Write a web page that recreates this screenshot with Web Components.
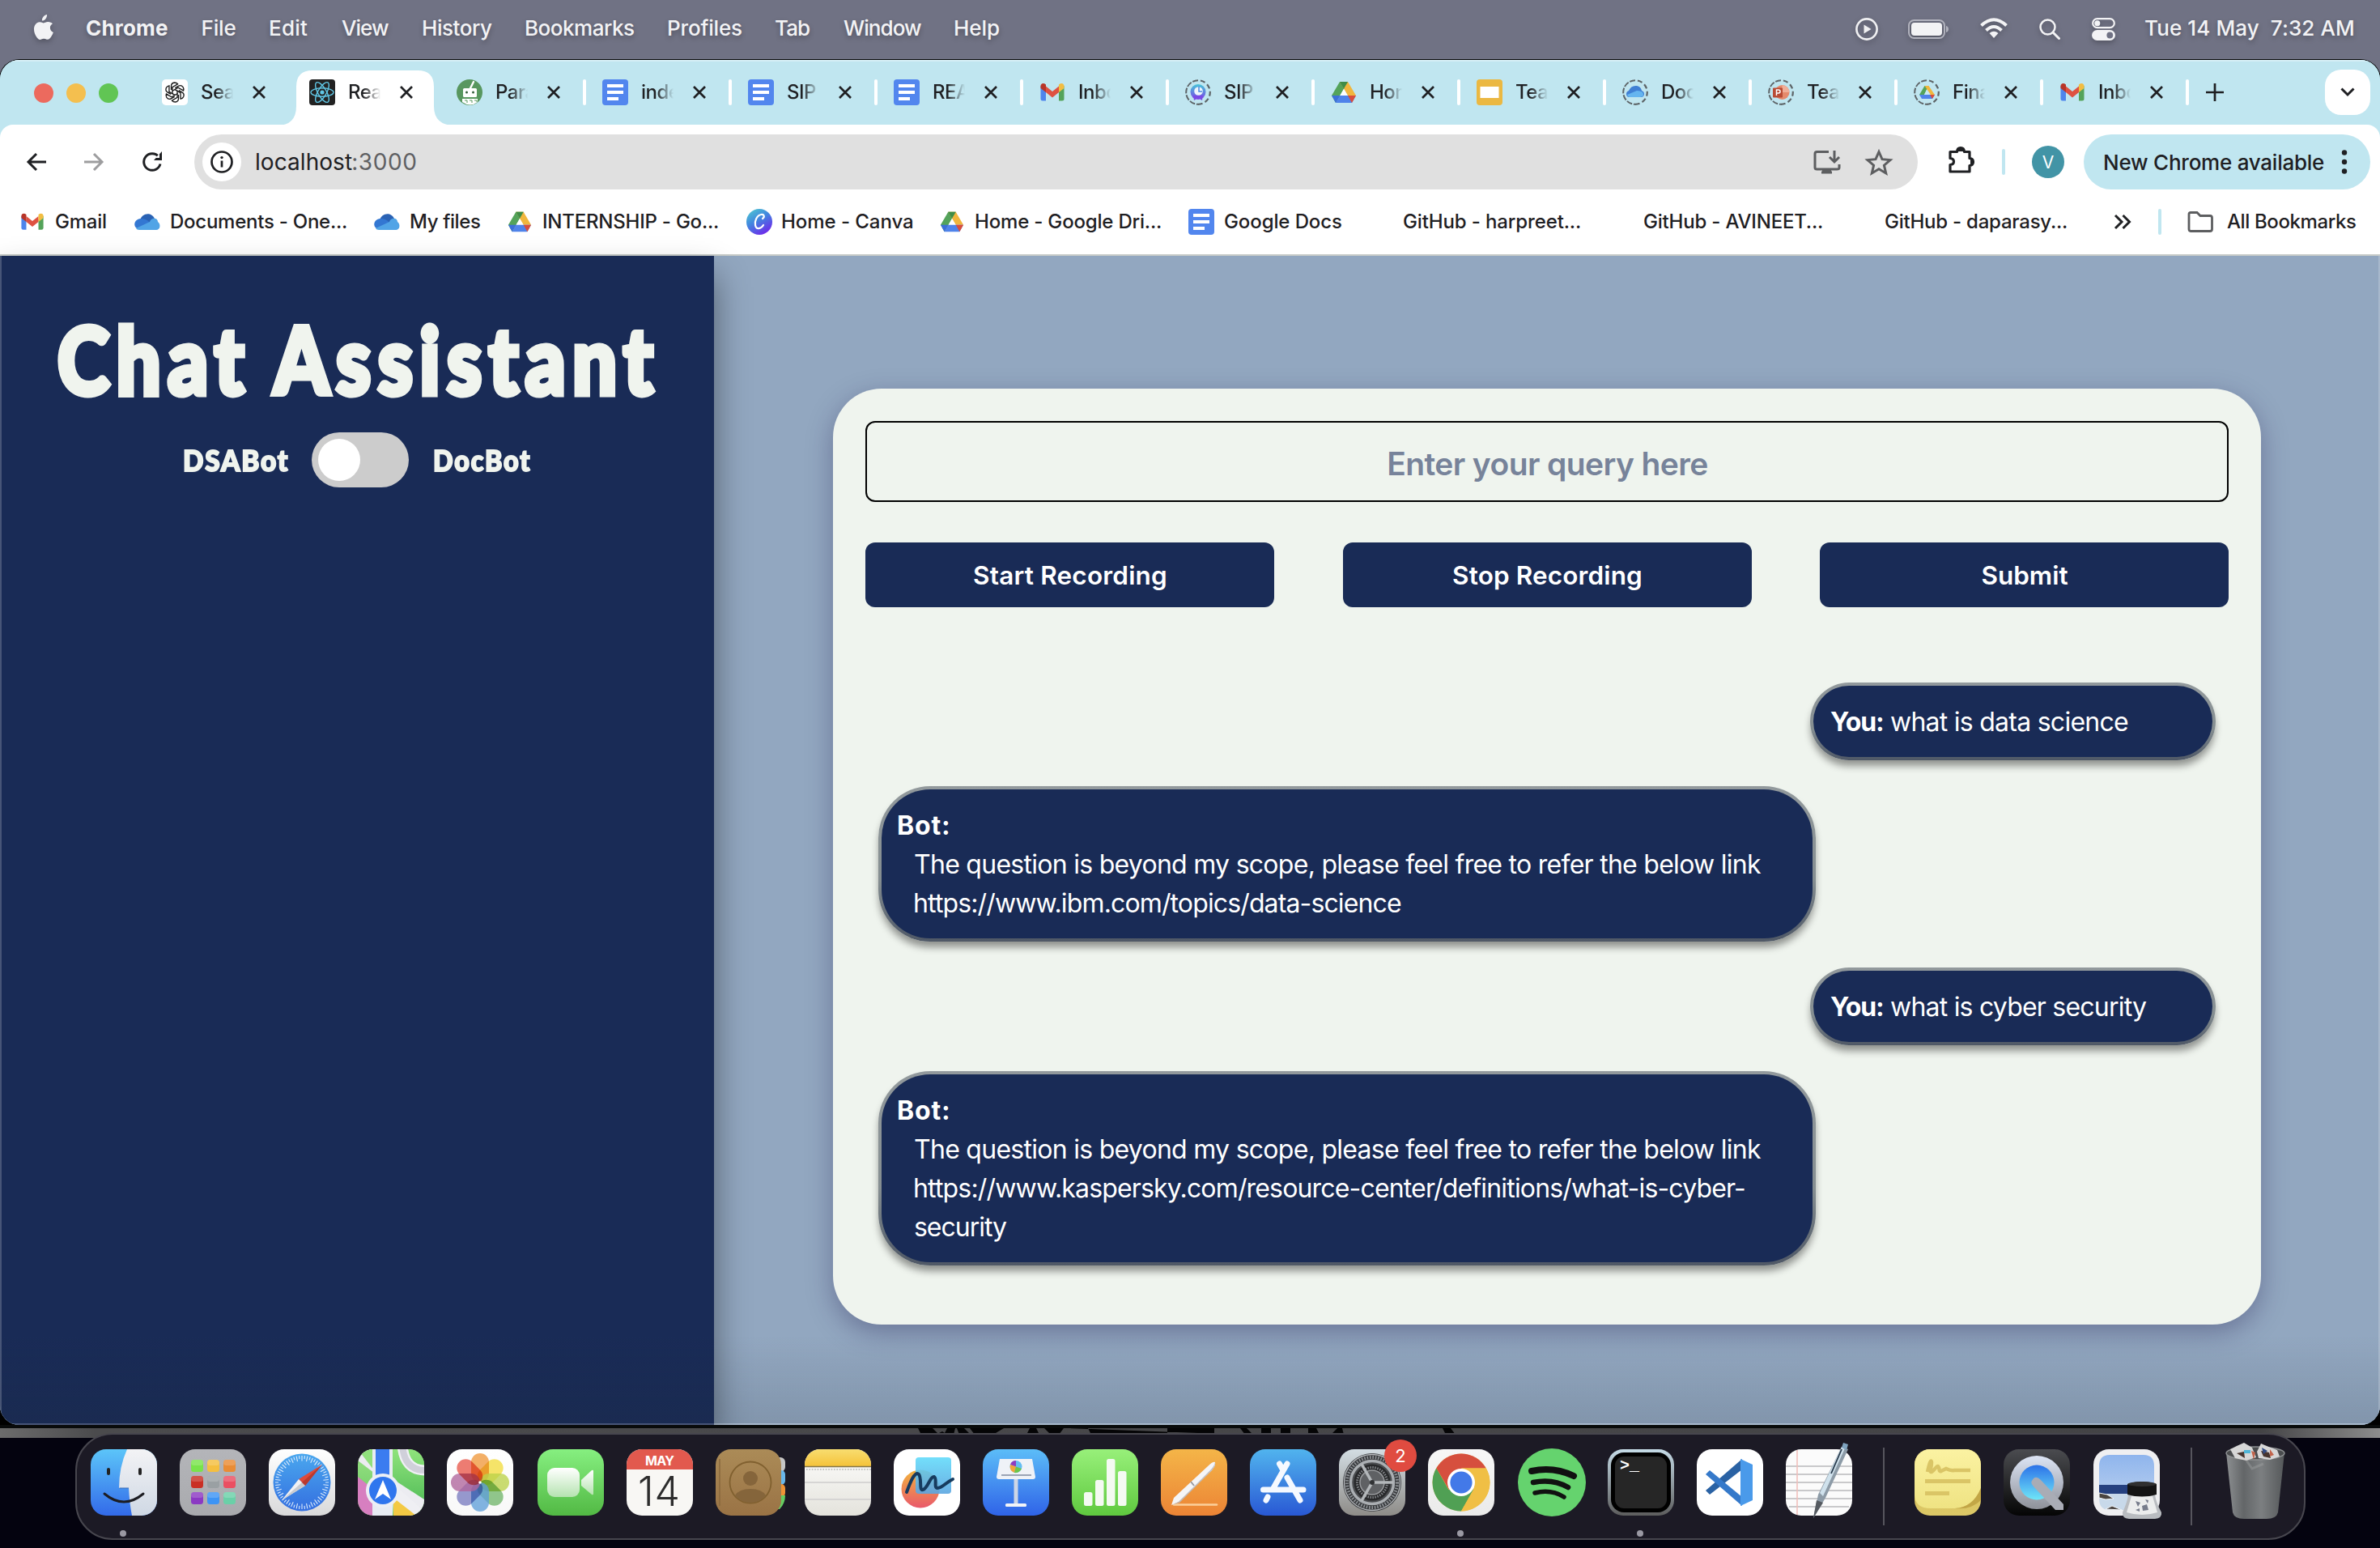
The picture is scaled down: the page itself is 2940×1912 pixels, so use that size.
<!DOCTYPE html>
<html lang="en">
<head>
<meta charset="utf-8">
<title>Chat Assistant</title>
<style>
html,body{margin:0;width:2940px;height:1912px;overflow:hidden;background:#04030f;font-family:Inter,"Liberation Sans",sans-serif}
</style>
</head>
<body>
<mac-desktop></mac-desktop>
<script>
const gptArm = 'M11.500 13V8.500q0-4 4-4.500 2.500 0 4 1.800L13 9.600v8.600';
const ICONS = {
apple:'<svg viewBox="0 0 26 32"><path fill="#f3f3f5" d="M18 0c.3 2-.6 4-1.800 5.500-1.200 1.400-2.700 2.200-4.300 2.100-.2-1.900.7-3.900 1.800-5.100C14.900 1 16.600.2 18 0zM25 11.200c-2 1.200-3.100 2.900-3.100 5.100 0 2.600 1.500 4.600 4 5.600-.6 1.900-1.600 3.800-2.800 5.500-1.200 1.700-2.400 3.400-4.300 3.400-1.900 0-2.400-1.100-4.600-1.100S11.300 30.900 9.500 31c-1.900.1-3.300-1.800-4.500-3.500C2.500 23.900.600 17.300 3.200 12.900c1.300-2.300 3.600-3.600 6-3.700 1.900 0 3.600 1.200 4.700 1.200 1.100 0 3.200-1.500 5.500-1.300 2.400.1 4.200.9 5.600 2.100z"/></svg>',
play:'<svg viewBox="0 0 28 28"><circle cx="14" cy="14" r="12.600" fill="none" stroke="#f0f0f2" stroke-width="2.600"/><path d="M10.500 8.500l9 5.500-9 5.500z" fill="#f0f0f2"/></svg>',
battery:'<svg viewBox="0 0 51 24"><rect x="1" y="1" width="44" height="22" rx="6.500" fill="none" stroke="#b1b2bd" stroke-width="2"/><rect x="4" y="4" width="38" height="16" rx="4" fill="#f3f3f5"/><path d="M47 8c4 1 4 7 0 8z" fill="#b1b2bd"/></svg>',
wifi:'<svg viewBox="0 0 34 26"><g fill="none" stroke="#f3f3f5" stroke-width="4"><path d="M1.500 9.500Q17-5 32.500 9.500"/><path d="M7.500 15.500Q17 6.500 26.500 15.500"/></g><path d="M17 25l-5.500-6q5.500-4.500 11 0z" fill="#f3f3f5"/></svg>',
search:'<svg viewBox="0 0 26 26"><circle cx="10.500" cy="10.500" r="9" fill="none" stroke="#f3f3f5" stroke-width="2.500"/><path d="M17 17l7.500 7.500" stroke="#f3f3f5" stroke-width="3" stroke-linecap="round"/></svg>',
control:'<svg viewBox="0 0 29 28"><rect x="1.200" y="1.200" width="26.600" height="11" rx="5.500" fill="none" stroke="#f3f3f5" stroke-width="2.200"/><circle cx="6.800" cy="6.700" r="3.500" fill="#f3f3f5"/><rect x="0" y="15" width="29" height="13" rx="6.500" fill="#f3f3f5"/><circle cx="22.300" cy="21.500" r="3.900" fill="#707284"/></svg>',
gpt:'<svg viewBox="0 0 32 32"><rect width="32" height="32" rx="5" fill="#fff"/><g fill="none" stroke="#1a1a1a" stroke-width="1.350">'+[0,60,120,180,240,300].map(a=>`<path d="${gptArm}" transform="rotate(${a} 16 16)"/>`).join('')+'</g></svg>',
react:'<svg viewBox="0 0 32 32"><rect width="32" height="32" rx="4" fill="#222"/><g fill="none" stroke="#61c7e6" stroke-width="1.400"><ellipse cx="16" cy="16" rx="14" ry="5.200"/><ellipse cx="16" cy="16" rx="14" ry="5.200" transform="rotate(60 16 16)"/><ellipse cx="16" cy="16" rx="14" ry="5.200" transform="rotate(120 16 16)"/></g><circle cx="16" cy="16" r="2.600" fill="#61c7e6"/></svg>',
bot:'<svg viewBox="0 0 32 32"><circle cx="16" cy="16" r="16" fill="#58975f"/><path d="M17 11l4-8" stroke="#fff" stroke-width="2.400" stroke-linecap="round"/><rect x="8" y="11" width="17" height="11" rx="1.500" fill="#fff"/><circle cx="12.500" cy="16" r="1.500" fill="#37603d"/><circle cx="20.500" cy="16" r="1.500" fill="#37603d"/><path d="M7 24h19v4q-9 7-19 0z" fill="#fff"/><path d="M10 26h3v3m3-3h3v3m3-3h3v2" stroke="#58975f" fill="none"/></svg>',
docs:'<svg viewBox="0 0 32 32"><rect width="32" height="32" rx="4" fill="#5286ee"/><path d="M6 6h20v4H6zm0 8h20v4H6zm0 8h14v4H6z" fill="#fff"/></svg>',
gmail:'<svg viewBox="0 0 32 32"><path d="M1.500 8v16q0 2.500 2.500 2.500h4V13z" fill="#4e85ec"/><path d="M30.500 8v16q0 2.500-2.500 2.500h-4V13z" fill="#54a35a"/><path d="M8 8.500l8 6.500 8-6.500v7.500L16 22.500 8 16z" fill="#de5242"/><path d="M1.500 8.500C1.500 5 5 4 8 6.500V16l-6.500-5z" fill="#b83428"/><path d="M30.500 8.500C30.500 5 27 4 24 6.500V16l6.500-5z" fill="#f2bd42"/></svg>',
drive:'<svg viewBox="0 0 32 32"><path d="M11 3h10L11.500 20 6 29 1 20z" fill="#54a35a"/><path d="M21 3L31 20H21L11 3z" fill="#f1b63d"/><path d="M11 3h10l-5 8.700z" fill="#3f8c47"/><path d="M16 11.700L11.200 20h9.600z" fill="#fff"/><path d="M11.200 20H31l-5 9H6z" fill="#4f83ea"/><path d="M21 20h10l-5 9z" fill="#d94d3c"/><path d="M1 20h10.200L6 29z" fill="#3c6fd9"/></svg>',
slides:'<svg viewBox="0 0 32 32"><rect width="32" height="32" rx="4" fill="#ebb842"/><rect x="4.500" y="9" width="23" height="14" fill="#fff"/></svg>',
onedrive:'<svg viewBox="0 0 32 24"><path d="M7 10C9 1 21-1 25 8L14 20z" fill="#2a62b4"/><path d="M8 8q7 0 11 5L6 21C-2 20-2 9 8 8z" fill="#3377d2"/><path d="M19 12c2-6 10-5 10 0 4 3 3 10-2 10H6Q3 22 2 20z" fill="#51a4e6"/></svg>',
canva:'<svg viewBox="0 0 32 32"><defs><linearGradient id="c" x1="0" y1="0" x2=".6" y2="1"><stop offset="0" stop-color="#4fd0cf"/><stop offset=".5" stop-color="#4287df"/><stop offset="1" stop-color="#6b2eea"/></linearGradient></defs><circle cx="16" cy="16" r="16" fill="url(#c)"/><path d="M20 12c3-2 2-6-2-5-5 1-8 8-7 13 1 6 7 5 10 0" fill="none" stroke="#fff" stroke-width="2.200" stroke-linecap="round"/></svg>',
back:'<svg viewBox="0 0 26 24"><path d="M13 2L3 12l10 10M3 12h22" fill="none" stroke="#1f2023" stroke-width="3"/></svg>',
fwd:'<svg viewBox="0 0 26 24"><path d="M13 2l10 10-10 10M23 12H1" fill="none" stroke="#9d9d9f" stroke-width="3"/></svg>',
reload:'<svg viewBox="0 0 26 26"><path d="M23 15.500A10.300 10.300 0 1 1 21 6.500L24 10" fill="none" stroke="#1f2023" stroke-width="3"/><path d="M25 0v11H15z" fill="#1f2023"/><path d="M17 8l5 0 0-5z" fill="#fff"/></svg>',
info:'<svg viewBox="0 0 28 28"><circle cx="14" cy="14" r="12.500" fill="none" stroke="#1f2023" stroke-width="2.700"/><path d="M14 12.500v8" stroke="#1f2023" stroke-width="2.700"/><circle cx="14" cy="8.600" r="1.700" fill="#1f2023"/></svg>',
install:'<svg viewBox="0 0 34 30"><path d="M19 2.500H4.500Q2 2.500 2 5v17q0 2 2.500 2H29q3 0 3-2v-4M10 28h13" fill="none" stroke="#5d5e60" stroke-width="3"/><path d="M11 25h11v4H11z" fill="#5d5e60"/><path d="M26 1v13M20 9l6 6 6-6" fill="none" stroke="#5d5e60" stroke-width="3"/></svg>',
star:'<svg viewBox="0 0 34 32"><path d="M17 3.500l4 9.200 10 .9-7.600 6.600 2.300 9.800-8.700-5.200L8.300 30l2.300-9.800L3 13.600l10-.9z" fill="none" stroke="#5d5e60" stroke-width="3"/></svg>',
ext:'<svg viewBox="0 0 34 34"><path d="M3 6.500h8.500C12 0 20 0 20.500 6.500H27v8c6 .5 6 8.500 0 9V31H3v-8.500c6-.5 6-7.500 0-8z" fill="none" stroke="#1f2023" stroke-width="3.200" stroke-linejoin="round"/><path d="M12 6c0-6 8-6 8 0zm16 9c5 0 5 8 0 8z" fill="#1f2023"/></svg>',
dots:'<svg viewBox="0 0 8 30"><circle cx="4" cy="3.500" r="3.200" fill="#1f2023"/><circle cx="4" cy="15" r="3.200" fill="#1f2023"/><circle cx="4" cy="26.500" r="3.200" fill="#1f2023"/></svg>',
folder:'<svg viewBox="0 0 32 26"><path d="M2 3.500Q2 1.500 4 1.500h8l4 4h12q2.500 0 2.500 2.500v14q0 2.500-2.500 2.500H4Q2 24.500 2 22z" fill="none" stroke="#5d5e60" stroke-width="2.800"/></svg>',
more:'<svg viewBox="0 0 22 18"><path d="M2 1l8 8-8 8M11.500 1l8 8-8 8" fill="none" stroke="#1f2023" stroke-width="3"/></svg>',
close:'<svg viewBox="0 0 16 16"><path d="M1 1l14 14M15 1L1 15" stroke="#1f2023" stroke-width="2.700"/></svg>',
plus:'<svg viewBox="0 0 22 22"><path d="M11 0v22M0 11h22" stroke="#1f2023" stroke-width="2.700"/></svg>',
down:'<svg viewBox="0 0 18 12"><path d="M1.500 1.500L9 9l7.500-7.500" fill="none" stroke="#1f2023" stroke-width="3"/></svg>'
};
const ring = inner => `<svg viewBox="0 0 32 32"><path d="M16 1.200A14.800 14.800 0 0 0 16 30.800" fill="none" stroke="#5d6467" stroke-width="2" stroke-dasharray="7 1.800"/><path d="M16 1.200A14.800 14.800 0 0 1 16 30.800" fill="none" stroke="#5d6467" stroke-width="2.200" stroke-dasharray="6 3.400" stroke-dashoffset="-3"/>${inner}</svg>`;
ICONS.ringOct = ring('<defs><linearGradient id="o" x2="0" y2="1"><stop offset="0" stop-color="#46c6d8"/><stop offset="1" stop-color="#7c45e6"/></linearGradient></defs><circle cx="16" cy="15.500" r="9.500" fill="url(#o)"/><path d="M10 20l1 6 5-3 5 3 1-6z" fill="#7a4ae5"/><circle cx="16.500" cy="14.500" r="5.300" fill="#eef5fc"/><path d="M17 9v6h4" stroke="#4b8ae0" stroke-width="1.500" fill="none"/>');
ICONS.ringCloud = ring('<path d="M8 14q3-7 10-6 5 1 6 6 3 1 3 4t-3 4H9q-4 0-4-4 0-3 3-4z" fill="#3f7fd4"/><path d="M6 19l12-5q9 0 8 6-1 2-4 2H9q-2 0-3-3z" fill="#65b5ef"/>');
ICONS.ringPpt = ring('<circle cx="17.500" cy="16" r="9" fill="#e58a6c"/><path d="M17.500 7a9 9 0 0 1 9 9h-9z" fill="#f0ae98"/><rect x="6" y="10.500" width="12" height="12" rx="1" fill="#b94b34"/><path d="M10.500 20v-7h2.500q2 0 2 2t-2 2h-2.500" stroke="#fff" stroke-width="1.500" fill="none"/>');
ICONS.ringDrive = ring('<path d="M13.500 8h5L11 23l-4-4z" fill="#54a35a"/><path d="M13.500 8h5L26 19h-5z" fill="#f1b63d"/><path d="M7 19h19l-3 5H10z" fill="#4f83ea"/><path d="M20 19h6l-3 5z" fill="#d94d3c"/><path d="M16 12.500l-3 6.500h6.500z" fill="#c8e9f2"/>');

const grad = (id,a,b) => `<linearGradient id="${id}" x2="0" y2="1"><stop offset="0" stop-color="${a}"/><stop offset="1" stop-color="${b}"/></linearGradient>`;
const tile = (body,a,b,extra='') => `<svg viewBox="0 0 82 82"><defs>${grad('bg',a,b)}<clipPath id="cp"><rect width="82" height="82" rx="19"/></clipPath>${extra}</defs><rect width="82" height="82" rx="19" fill="url(#bg)"/><g clip-path="url(#cp)">${body}</g></svg>`;
const rep = (n,f) => Array.from({length:n},(_,i)=>f(i)).join('');
const petals = ['#f0993c','#f3dd3e','#bbd24a','#72b66c','#5f9fd8','#7a7cc0','#b0659c','#e8574a'];
const DOCK = {
finder:tile(`<path d="M45 0h37v82H51q-3-15-4-34H35Q35 22 45 0z" fill="url(#w)"/><path d="M35.500 48H47" stroke="#3a6db5" stroke-width="1"/><path d="M22 25v5M61 25v5" stroke="#222" stroke-width="4" stroke-linecap="round"/><path d="M17 55q24 20 48 0" fill="none" stroke="#1d1d22" stroke-width="3" stroke-linecap="round"/>`,'#5cc5f9','#336ae9',grad('w','#f3f3f5','#cfd8e4')),
launch:tile(rep(9,i=>{const c=['#79e34b','#f5bf3f','#e98c35','#c92f24','#9aa0a3','#ea4f62','#8b39c3','#3d94f5','#6ad0a8'][i];return `<rect x="${14+(i%3)*20}" y="${13+Math.floor(i/3)*20}" width="15" height="15" rx="3.500" fill="${c}"/><rect x="${14+(i%3)*20}" y="${13+Math.floor(i/3)*20}" width="15" height="7" rx="3.500" fill="#fff" opacity=".18"/>`}),'#b4b5b9','#a9aaae'),
safari:tile(`<circle cx="41" cy="41" r="35.500" fill="url(#s)"/>`+rep(60,i=>`<path d="M41 8v${i%2?4:6.500}" stroke="#dcebfb" stroke-width="1.100" transform="rotate(${i*6} 41 41)"/>`)+`<path d="M66 19L37 37l8 8z" fill="#dd4a3b"/><path d="M16 63l21-26 8 8z" fill="#f1f1f3"/><path d="M16 63L45 45l-4-4z" fill="#c9cbd0"/><path d="M66 19L45 45l-4-4z" fill="#b93a30"/>`,'#ffffff','#d9d9da',grad('s','#4aa7ee','#346fe0')),
maps:tile(`<path d="M0 34L0 82H20V50z" fill="#d77fc0"/><path d="M0 14L82 76V54L18 0H0z" fill="#ececf1"/><path d="M0 0h20v26z" fill="#90e07c"/><path d="M42 0v36L82 62V0z" fill="url(#m)"/><path d="M42 42l40 34v6H44z" fill="#efeff3"/><path d="M44 60L72 82H44z" fill="#f3c944"/><path d="M55-6q2 33 30 32" fill="none" stroke="#f0f0f5" stroke-width="13"/><path d="M55-6q2 33 30 32" fill="none" stroke="#d0d0da" stroke-width="8"/><path d="M18 0h25v82H18z" fill="#e8ecf3"/><path d="M22 0h17v40H22z" fill="#3b7cf0"/><circle cx="31" cy="51" r="21" fill="#eceff5"/><circle cx="31" cy="51" r="17" fill="#2f76ee"/><path d="M31 38l10 24-10-7-10 7z" fill="#fff"/>`,'#9be285','#64c760',grad('m','#90e37c','#59c15c')),
photos:tile(petals.map((c,i)=>`<rect x="30" y="5" width="22" height="36" rx="11" fill="${c}" opacity=".78" transform="rotate(${i*45} 41 41)" style="mix-blend-mode:${i%2?'multiply':'normal'}"/>`).join('')+'<circle cx="41" cy="41" r="1.800" fill="#fff"/>','#ffffff','#f8f8f8'),
facetime:tile(`<rect x="12" y="23" width="40" height="36" rx="9" fill="url(#f)"/><path d="M54 38l13-12q2-1 2 1v28q0 2-2 1L54 45z" fill="url(#f)"/>`,'#86ef80','#52b944',grad('f','#ffffff','#b5e3b0')),
calendar:`<svg viewBox="0 0 82 82"><defs><clipPath id="cp"><rect width="82" height="82" rx="19"/></clipPath></defs><g clip-path="url(#cp)"><rect width="82" height="82" fill="#f8f7f4"/><rect width="82" height="25" fill="#e2594e"/></g><text x="41" y="19.500" text-anchor="middle" font-family="Inter" font-weight="700" font-size="16" textLength="36" fill="#fff">MAY</text><text x="40" y="69.500" text-anchor="middle" font-family="Inter" font-weight="300" font-size="50" textLength="52" fill="#2d2d2d">14</text></svg>`,
contacts:`<svg viewBox="0 0 82 82"><defs>${grad('bg','#ab8b57','#9a7345')}</defs><rect x="60" y="10" width="26" height="18" rx="6" fill="#c6c6c6"/><rect x="60" y="26" width="26" height="18" rx="5" fill="#69b7ea"/><rect x="60" y="43" width="26" height="16" rx="5" fill="#ee9336"/><path d="M70 57h16q0 10-7 17H70z" fill="#65cd61"/><rect width="81" height="82" rx="19" fill="url(#bg)"/><path d="M5 12v58" stroke="#8a693d" stroke-width="1.500"/><circle cx="43" cy="41" r="25.500" fill="none" stroke="#80602f" stroke-width="1.800"/><circle cx="43" cy="36" r="9" fill="#85653b"/><path d="M24 57q5-8 19-8t19 8Q55 66 43 66T24 57z" fill="#85653b"/></svg>`,
notes:tile(`<path d="M0 0h82v21H0z" fill="url(#n)"/><path d="M0 21.500h82" stroke="#827449" stroke-width="1.600"/><path d="M2 25h80" stroke="#b5b5b3" stroke-width="1.600" stroke-dasharray="1.600 1.800"/><path d="M0 41h82M0 62h82" stroke="#d6d5d4" stroke-width="1.800"/>`,'#fdfdfc','#e4e3dc',grad('n','#f8dd70','#f5c33a')),
freeform:tile(`<circle cx="33" cy="49" r="23.500" fill="url(#q)"/><rect x="27" y="10" width="44" height="45" rx="4" fill="url(#r)" opacity=".9"/><path d="M16 53C20 42 26 26 31 31c4 5 0 21 5 19 6-1 9-17 14-16 4 2-1 14 4 14 6 0 9-6 19-11" fill="none" stroke="#173b5e" stroke-width="4" stroke-linecap="round"/>`,'#fff','#fff',grad('q','#f2b43c','#e9596b')+grad('r','#63dbfa','#5aa5e0')),
keynote:tile(`<path d="M21 12h40l4 22q0 3-3 3H20q-3 0-3-3z" fill="#eff2f7"/><path d="M23 31h37v2H23z" fill="#9ba4b4"/><circle cx="41" cy="21.500" r="7.500" fill="#63bdf2"/><path d="M41 21.500V14a7.500 7.500 0 0 0-7 5z" fill="#8f3bc0"/><path d="M41 21.500L34 19q-2 7 5 10z" fill="#f3a43a"/><path d="M41 21.500l-2 7.500q6 1 9-5z" fill="#6dc64b"/><path d="M38.500 37h5v31h-5z" fill="#cdd6e6"/><rect x="28" y="67" width="26" height="4" rx="1.500" fill="#f2f4f8"/>`,'#5cbdf8','#2f63e8'),
numbers:tile([[15,53],[29,38],[43,12],[57,27]].map(([x,y])=>`<rect x="${x}" y="${y}" width="10.500" height="${70-y}" rx="2.500" fill="#f4faf2"/>`).join(''),'#98f07a','#5fc93f'),
pages:tile(`<path d="M16 68.500h53" stroke="#fbcf9b" stroke-width="2.500" stroke-linecap="round"/><path d="M13 69l3-9 42-39q6-6 9-5 1 4-4 10L22 65z" fill="#f5f5f7"/><path d="M13 69L22 65l39-39q5-5 6-10 1 4-4 10L23 66z" fill="#bcbcc1"/><path d="M37 40l4 5" stroke="#99999e" stroke-width="2"/>`,'#f4b548','#ec8435'),
appstore:tile(`<g stroke="#f5f9ff" stroke-width="7" stroke-linecap="round"><path d="M46 18L29 48M36.500 18L41 26M46 35l16 28M16.500 50H66M22 59l-2 4"/></g>`,'#51b4ee','#2958d4'),
settings:tile(`<circle cx="41" cy="41" r="36" fill="#37393c"/><circle cx="41" cy="41" r="34.500" fill="none" stroke="#b8bbbf" stroke-width="1.300"/><circle cx="41" cy="41" r="31" fill="none" stroke="#8f9397" stroke-width="4" stroke-dasharray="1.600 1.800"/><circle cx="41" cy="41" r="26.500" fill="#4a4c4f" stroke="#aaaeb2" stroke-width="3.500"/><circle cx="41" cy="41" r="19" fill="none" stroke="#28292b" stroke-width="7"/><circle cx="41" cy="41" r="18.500" fill="none" stroke="#85888c" stroke-width="3" stroke-dasharray="1.400 1.600"/><circle cx="41" cy="41" r="15" fill="#5f6164" stroke="#97999c" stroke-width="1.500"/><g stroke="#b3b7ba" stroke-width="3.500"><path d="M41 41h26"/><path d="M41 41h26" transform="rotate(120 41 41)"/><path d="M41 41h26" transform="rotate(240 41 41)"/></g><circle cx="41" cy="41" r="3" fill="#303234"/>`,'#d3dde3','#8e8c88'),
chrome:tile(`<circle cx="41" cy="41" r="35.500" fill="#f0bf45"/><path d="M10.300 23.200A35.500 35.500 0 0 1 71.700 23.200L41 36z" fill="#d64f3e"/><path d="M10.300 23.200A35.500 35.500 0 0 0 41 76.500L56.500 49.500 25.500 50z" fill="#50a054"/><path d="M56.500 49L41 76.500A35.500 35.500 0 0 0 71.700 23.200H41z" fill="#f0bf45"/><path d="M10.300 23.200H41V40L26 50z" fill="#d64f3e"/><circle cx="41" cy="41" r="17" fill="#fff"/><circle cx="41" cy="41" r="13.600" fill="#4379e8"/>`,'#f7f7f7','#eaeaea'),
spotify:`<svg viewBox="0 0 82 82"><circle cx="41" cy="41" r="42" fill="#65d36e"/><g fill="none" stroke="#111" stroke-linecap="round"><path d="M16 27q27-6 52 6" stroke-width="8"/><path d="M18 41q24-5 43 6" stroke-width="6.500"/><path d="M20 54q20-5 36 5" stroke-width="5.500"/></g></svg>`,
terminal:tile(`<rect x="4" y="4" width="74" height="74" rx="16" fill="#000"/><rect x="9" y="9" width="64" height="64" rx="11" fill="#262626"/><text x="15" y="26" font-family="Liberation Mono" font-weight="700" font-size="20" fill="#fff">&gt;_</text>`,'#c5dbe7','#5d5d5d'),
vscode:tile(`<path d="M11 51l5 5 40-31V12z" fill="#2a62a4"/><path d="M11 31l5-5 40 33v11z" fill="#3579ca"/><path d="M54 12l15 7v44l-15 7z" fill="#4a9aea"/>`,'#fff','#fff'),
textedit:`<svg viewBox="0 0 82 82"><rect width="82" height="82" rx="19" fill="#fbfbfb"/><path d="M0 21h82M0 31h82M0 41h82M0 51h82M0 61h82M4 71h74" stroke="#b9b9bc" stroke-width="1.500"/><path d="M14 1v80" stroke="#f1bdb8" stroke-width="1.500"/><path d="M40 56L69-3l8 3L49 60 34 85z" fill="#8d9ba7"/><path d="M42 54L69-3l4 2L46 58z" fill="#cfe1ec"/><path d="M71-8l6 2-2 7-6-3z" fill="#7fa3bf"/><path d="M56 30l13-30" stroke="#27384a" stroke-width="1.800"/><path d="M34 85l4-22 8 3z" fill="#555a60"/></svg>`,
stickies:tile(`<path d="M0 0h82v48Q72 72 50 73H20Q0 73 0 55z" fill="url(#y)"/><path d="M82 48Q72 72 50 73q20 2 32-10z" fill="#c2a646"/><path d="M16 28q4-18 5-12c0 7-3 13 0 12 5-3 6-8 8-7 3 3 0 7 4 6l6-3q6 3 10 2h20" fill="none" stroke="#dac566" stroke-width="4.500"/><path d="M13 37h56v5H13zm0 15h30v5H13z" fill="#dac566"/>`,'#d7bb55','#dcc867',grad('y','#fbf2a2','#efe383')),
quicktime:tile(`<circle cx="41" cy="41" r="33" fill="url(#k)"/><circle cx="41" cy="41" r="21.500" fill="url(#l)"/><path d="M35 39q4-8 11-1L74 68v7H64L37 46q-4-4-2-7z" fill="#a9acb5"/>`,'#4b4c50','#050505',grad('k','#dde5f5','#8e9199')+grad('l','#2c72e8','#6fe6f8')),
preview:`<svg viewBox="0 0 82 82"><defs>${grad('v','#8fb5ed','#aac6ee')}</defs><rect width="82" height="82" rx="19" fill="#efeff1"/><path d="M7 44V21Q7 7 20 7h42q13 0 13 14v23z" fill="url(#v)"/><path d="M7 44h68v12H7z" fill="#25407f"/><path d="M7 55h68v6Q75 75 62 75H20Q7 75 7 61z" fill="#c8d9ea"/><path d="M7 54l10 2 8 5-10 1-8-2zM15 74l8-4 12 5z" fill="#4b4541" stroke="#f3f6fa"/><path d="M43 56h33q1 9 8 22 1 7-8 8H44q-9-1-8-8 6-13 7-22z" fill="#b9bcc0"/><path d="M47 58h26l6 20q-19 6-38 0z" fill="#eceded"/><path d="M52 64l6 2-3 5zm8 6l6-2 2 7-7 1zm-8 5l5-2v4zm12-13l4 1-1 4z" fill="#777c8b"/><path d="M42 43q18-6 36 0v13q-18 5-36 0z" fill="#141414"/><ellipse cx="60" cy="43" rx="17.500" ry="3" fill="#303030"/></svg>`,
trash:`<svg viewBox="0 0 82 82"><defs><linearGradient id="t"><stop offset="0" stop-color="#8d9092"/><stop offset=".3" stop-color="#636668"/><stop offset=".6" stop-color="#7c7f81"/><stop offset="1" stop-color="#55585a"/></linearGradient></defs><path d="M5 4h72l-8 74q-2 8-14 8H27q-12 0-14-8z" fill="url(#t)"/><ellipse cx="41" cy="5" rx="36" ry="8" fill="#4a4c4e" stroke="#8e9193" stroke-width="1.500"/><path d="M10 0l8-4 9-4 10 6 5 12-12 4-14-3zM43 3l5-10 12 5 8 3 3 8-12 4-14-2z" fill="#d7d7d7"/><path d="M18 5l9-2 1 8zM48 2l10 2 2 7-9-2z" fill="#47352f"/><path d="M27 1h8v4h-8z" fill="#4fb6d8"/><path d="M36 2l5 2-2 9zM59 0l5 7-5 2z" fill="#c2654d"/><path d="M49-2l7 4-5 4z" fill="#324b83"/><path d="M30 14l7 10 14-6" fill="none" stroke="#a2a5a6" stroke-width="3" opacity=".4"/></svg>`
};

function define(name, css, html) {
  customElements.define(name, class extends HTMLElement {
    connectedCallback() {
      if (this.shadowRoot) return;
      const root = this.attachShadow({mode:'open'});
      root.innerHTML = `<style>*{box-sizing:border-box}${css}</style>` + (typeof html === 'function' ? html(this) : html);
    }
  });
}

/* Text set to a given ink width: spacing by default, horizontal scale with the "scale" attribute. */
customElements.define('fit-text', class extends HTMLElement {
  connectedCallback() {
    if (this.shadowRoot) return;
    this.attachShadow({mode:'open'}).innerHTML = '<style>:host{display:inline-block;white-space:pre}</style><slot></slot>';
    const w = +this.getAttribute('w');
    if (!w) return;
    const cs = getComputedStyle(this), t = this.textContent;
    const ctx = document.createElement('canvas').getContext('2d');
    ctx.font = `${cs.fontWeight} ${cs.fontSize} ${cs.fontFamily}`;
    const m = ctx.measureText(t);
    let ink = m.actualBoundingBoxLeft + m.actualBoundingBoxRight;
    if (this.hasAttribute('scale')) {
      ink += (parseFloat(cs.letterSpacing) || 0) * (t.length - 1);
      const k = w / ink;
      this.style.transformOrigin = '0 50%';
      this.style.transform = `scaleX(${k})`;
      this.style.width = w + 'px';
      this.style.marginLeft = m.actualBoundingBoxLeft * k + 'px';
    } else {
      this.style.letterSpacing = (w - ink) / (t.length - 1) + 'px';
      this.style.marginLeft = m.actualBoundingBoxLeft + 'px';
    }
  }
});

define('app-icon', ':host{display:block}svg{display:block;width:100%;height:100%;overflow:visible}', el => ICONS[el.getAttribute('name')] || DOCK[el.getAttribute('name')]);
const ic = (n,w,h=w,s='') => `<app-icon name="${n}" style="width:${w}px;height:${h}px;${s}"></app-icon>`;

define('menu-bar', `
:host{display:flex;justify-content:space-between;height:73px;background:#707284;color:#f3f3f5;font-size:26px;font-weight:500;text-shadow:0 3px 6px rgba(0,0,0,.28);padding:0 34px 0 40px;line-height:70px}
.l{display:grid;grid-template-columns:67px 143.500px 83.500px 88px 101px 127px 176px 132px 84px 138px 80px}
.r{display:grid;grid-template-columns:65px 89px 73px 65px 66px 256px}
app-icon{align-self:start;filter:drop-shadow(0 3px 3px rgba(0,0,0,.25))}`,
`<div class="l">${ic('apple',26,32,'margin-top:18px')}<fit-text w="100" style="font-weight:700">Chrome</fit-text><fit-text w="41">File</fit-text><fit-text w="46">Edit</fit-text><fit-text w="58">View</fit-text><fit-text w="85">History</fit-text><fit-text w="133">Bookmarks</fit-text><fit-text w="90">Profiles</fit-text><fit-text w="42">Tab</fit-text><fit-text w="96">Window</fit-text><fit-text w="54">Help</fit-text></div>
<div class="r">${ic('play',28,28,'margin-top:22px')}${ic('battery',51,24,'margin-top:24px')}${ic('wifi',34,26,'margin-top:22px')}${ic('search',26,26,'margin-top:23px')}${ic('control',29,28,'margin-top:22px')}<fit-text w="257">Tue 14 May  7:32 AM</fit-text></div>`);

define('browser-tab', `
:host{display:flex;align-items:center;width:180px;flex:none;padding-left:22px;height:80px;position:relative;font-size:24px;font-weight:500;color:#1f2023}
.t{margin-left:16px;width:41px;overflow:hidden;white-space:nowrap;-webkit-mask:linear-gradient(90deg,#000 45%,transparent 98%);letter-spacing:-.5px;line-height:40px}
.x{margin-left:23px;z-index:1}.i,.t{z-index:1}
.bg{position:absolute;left:-18px;top:13px;width:220px;height:68px}
.sep{margin-left:auto;width:4px;height:32px;background:#fff;border-radius:2px;margin-right:-2px}`,
el => `${el.hasAttribute('active')?'<svg class="bg" viewBox="0 0 220 68"><path d="M0 68q24 0 24-24V20Q24 0 44 0h130q20 0 20 20v24q0 24 26 24z" fill="#fff"/></svg>':''}<span class="i">${ic(el.getAttribute('icon'),32)}</span><span class="t">${el.getAttribute('label')}</span><span class="x">${ic('close',16)}</span>${el.hasAttribute('sep')?'<span class="sep"></span>':''}`);
const tab = (i,l,a='sep') => `<browser-tab icon="${i}" label="${l}" ${a}></browser-tab>`;

define('tab-strip', `
:host{display:flex;height:80px;align-items:center;background:#c0e6f0;padding:0 12px 0 42px;border-top:2px solid #d5eef5}
.lights{display:flex;gap:16px;width:136px}.lights i{width:24px;height:24px;border-radius:50%}
.tabs{display:flex;margin-top:-3px}
.menu{margin-left:auto;width:56px;height:56px;border-radius:20px;background:#fff;display:flex;align-items:center;justify-content:center;margin-top:-3px}`,
`<div class="lights"><i style="background:#ec6a5e"></i><i style="background:#f4bf4f"></i><i style="background:#61c554"></i></div>
<div class="tabs">${tab('gpt','Sea','style="width:182px"')}${tab('react','Rea','active style="width:182px"')}${tab('bot','Para')}${tab('docs','inde')}${tab('docs','SIP')}${tab('docs','REA')}${tab('gmail','Inbo')}${tab('ringOct','SIP')}${tab('drive','Hom')}${tab('slides','Tea')}${tab('ringCloud','Doc')}${tab('ringPpt','Tea')}${tab('ringDrive','Fina')}${tab('gmail','Inbo')}</div>
${ic('plus',22,22,'margin-left:23px;margin-top:-3px')}<div class="menu">${ic('down',18,12)}</div>`);

define('tool-bar', `
:host{display:flex;height:92px;align-items:center;background:#fff;color:#1f2023;padding:0 12px 0 32px;border-radius:16px 16px 0 0}
.omni{display:flex;align-items:center;width:2130px;height:68px;border-radius:34px;background:#e0e0e0;margin-left:39px;padding:0 31px 0 10px;font-size:28px}
.info{width:48px;height:48px;border-radius:50%;background:#fff;display:flex;align-items:center;justify-content:center;margin-right:19px}
.grey{color:#5f6063}
.grey{padding-left:1px}
.bar{width:4px;height:32px;border-radius:2px;background:#c0e6f0;margin:0 33px 0 33px}
.av{width:40px;height:40px;border-radius:50%;background:#4294a6;color:#fff;font-size:21px;display:flex;align-items:center;justify-content:center}
.pill{width:354px;height:68px;border-radius:34px;background:#c0e6f0;margin-left:24px;display:flex;align-items:center;padding:0 28px 0 26px;justify-content:space-between;font-size:26px;font-weight:500}`,
`${ic('back',26,24)}${ic('fwd',26,24,'margin-left:45px')}${ic('reload',26,26,'margin-left:46px')}
<div class="omni"><div class="info">${ic('info',28)}</div><fit-text w="118">localhost</fit-text><fit-text class="grey" w="77">:3000</fit-text>${ic('install',34,30,'margin-left:auto')}${ic('star',34,32,'margin-left:30px')}</div>
${ic('ext',34,34,'margin-left:37px;margin-top:-4px')}<div class="bar"></div><div class="av">V</div>
<div class="pill"><fit-text w="271">New Chrome available</fit-text>${ic('dots',8,30)}</div>`);

define('bookmark-bar', `
:host{display:grid;grid-template-columns:44px 97px 45px 251px 45px 120px 44px 251px 44px 195px 44px 263px 45px 221px 297px 298px 282px 55px 36px 49px 1fr;align-items:center;height:68px;background:#fff;padding-left:25px;padding-bottom:13px;font-size:24px;font-weight:500;color:#1f2023}
.bar{width:4px;height:32px;border-radius:2px;background:#c0e6f0}`,
`${ic('gmail',30)}<fit-text w="62">Gmail</fit-text>${ic('onedrive',32,24)}<fit-text w="217">Documents - One...</fit-text>${ic('onedrive',32,24)}<fit-text w="86">My files</fit-text>${ic('drive',30)}<fit-text w="216">INTERNSHIP - Go...</fit-text>${ic('canva',32)}<fit-text w="161">Home - Canva</fit-text>${ic('drive',30)}<fit-text w="229">Home - Google Dri...</fit-text>${ic('docs',32)}<fit-text w="144">Google Docs</fit-text><fit-text w="218">GitHub - harpreet...</fit-text><fit-text w="220">GitHub - AVINEET...</fit-text><fit-text w="224">GitHub - daparasy...</fit-text>${ic('more',22,18)}<div class="bar"></div>${ic('folder',32,26)}<fit-text w="159">All Bookmarks</fit-text>`);

define('side-panel', `
:host{display:flex;flex-direction:column;width:882px;height:100%;background:#192b56;color:#f0f4ee;font-family:Lato,"Open Sans",sans-serif;font-weight:900;box-shadow:0 24px 40px rgba(0,0,0,.45);z-index:1}
.h{height:140px;line-height:140px;font-size:115px;margin:56px 0 0 74px;-webkit-text-stroke:7px #f0f4ee;letter-spacing:10px;paint-order:stroke fill}
.h fit-text{display:block}
.row{display:flex;align-items:center;margin:22px 0 0 228px;height:68px;font-size:36px;-webkit-text-stroke:2px #f0f4ee;letter-spacing:2px}
.sw{width:120px;height:68px;border-radius:34px;background:#ccc;padding:8px;margin:0 32px 0 31px}
.sw i{display:block;width:52px;height:52px;border-radius:50%;background:#fff}`,
`<div class="h"><fit-text scale w="737">Chat Assistant</fit-text></div><div class="row"><fit-text scale w="128">DSABot</fit-text><div class="sw"><i></i></div><fit-text scale w="118">DocBot</fit-text></div>`);

define('nav-button', `:host{display:flex;align-items:center;justify-content:center;width:505px;height:80px;border-radius:12px;background:#192b56;color:#fff;font-size:31.500px;font-weight:600;padding-left:2px}`,
 '<slot></slot>');

define('chat-bubble', `
:host{display:block;padding:4px;border-radius:64px;width:1158px;background:linear-gradient(#92999c,#858e91 60%,#4f5866);box-shadow:0 8px 10px -1px rgba(0,0,0,.4);color:#fff;font-size:32px;line-height:48px;align-self:flex-start}
:host([me]){width:501px;align-self:flex-end}
.in{background:#192b56;border-radius:60px;padding:21px 21px 19px}
::slotted(div){padding-left:20px}`,
'<div class="in"><slot></slot></div>');

define('chat-card', `
:host{display:flex;flex-direction:column;width:1764px;height:1156px;padding:40px;border-radius:60px;background:#eff4ee;box-shadow:0 10px 32px rgba(35,30,80,.36)}
.q{height:100px;border:2px solid #000;border-radius:12px;display:flex;align-items:center;justify-content:center;font-size:39px;font-weight:560;color:#77839a;padding:4px 0 0 3px}
.b{display:flex;justify-content:space-between;margin-top:50px}
.log{display:flex;flex-direction:column;gap:32px;padding:0 16px;margin-top:93px}`,
`<div class="q"><fit-text w="394">Enter your query here</fit-text></div>
<div class="b"><nav-button><fit-text w="237">Start Recording</fit-text></nav-button><nav-button><fit-text w="232">Stop Recording</fit-text></nav-button><nav-button><fit-text w="106">Submit</fit-text></nav-button></div>
<div class="log">
<chat-bubble me><fit-text w="65" style="font-weight:700;width:75px">You:</fit-text><fit-text w="293">what is data science</fit-text></chat-bubble>
<chat-bubble><fit-text w="62" style="font-weight:700">Bot:</fit-text><div><fit-text w="1046">The question is beyond my scope, please feel free to refer the below link</fit-text></div><div><fit-text w="601">https://www.ibm.com/topics/data-science</fit-text></div></chat-bubble>
<chat-bubble me><fit-text w="65" style="font-weight:700;width:75px">You:</fit-text><fit-text w="316">what is cyber security</fit-text></chat-bubble>
<chat-bubble><fit-text w="62" style="font-weight:700">Bot:</fit-text><div><fit-text w="1046">The question is beyond my scope, please feel free to refer the below link</fit-text></div><div><fit-text w="1025">https://www.kaspersky.com/resource-center/definitions/what-is-cyber-</fit-text></div><div><fit-text w="114">security</fit-text></div></chat-bubble>
</div>`);

define('browser-window', `
:host{display:flex;flex-direction:column;height:1686px;border-radius:24px;overflow:hidden;background:#c0e6f0;box-shadow:0 0 0 1px #000}
.page{display:flex;height:1446px;border-top:2px solid #c8ccc9;background:#92a7c0;position:relative}
.main{flex:1;padding:164px 0 0 147px;background:#92a7c0}
.shade{position:absolute;inset:auto 0 0 0;height:110px;background:linear-gradient(transparent,rgba(30,40,50,.14));border-bottom:2px solid rgba(255,255,255,.2);z-index:2}
.edge{position:absolute;inset:0;border:solid rgba(255,255,255,.2);border-width:0 2px;z-index:3}`,
`<tab-strip></tab-strip><tool-bar></tool-bar><bookmark-bar></bookmark-bar><div class="page"><side-panel></side-panel><div class="main"><chat-card></chat-card></div><div class="shade"></div><div class="edge"></div></div>`);

define('dock-item', `
:host{display:block;position:relative;width:82px;height:82px}
app-icon{width:82px;height:82px}
.dot{position:absolute;left:36px;top:100px;width:8px;height:8px;border-radius:50%;background:#9a99a3}
.badge{position:absolute;left:56px;top:-12px;width:40px;height:40px;border-radius:50%;background:#e04b40;color:#fff;font-size:22px;line-height:40px;text-align:center}`,
el => `<app-icon name="${el.getAttribute('name')}"></app-icon>${el.hasAttribute('running')?'<span class="dot"></span>':''}${el.hasAttribute('badge')?`<span class="badge">${el.getAttribute('badge')}</span>`:''}`);

define('app-dock', `
:host{display:grid;grid-template-columns:110px 110px 110px 110px 112px 110px 110px 110px 110px 110px 110px 110px 110px 110px 110px 112px 110px 110px 110px 120px 39px 110px 111px 120px 39px 82px;margin:0 92px 0 93px;height:132px;padding:18px 0 0 17px;background:#1c1a25;border:2px solid #47464e;border-radius:46px}
.sep{width:2px;height:96px;background:#56555d;margin-top:-2px}`,
['finder','launch','safari','maps','photos','facetime','calendar','contacts','notes','freeform','keynote','numbers','pages','appstore','settings','chrome','spotify','terminal','vscode','textedit','|','stickies','quicktime','preview','|','trash'].map(n=>n==='|'?'<div class="sep"></div>':`<dock-item name="${n}" ${['finder','chrome','terminal'].includes(n)?'running':''} ${n==='settings'?'badge="2"':''}></dock-item>`).join(''));

define('mac-desktop', `
:host{display:flex;flex-direction:column;width:2940px;height:1912px;background:#04030f}
.top{background:linear-gradient(#707284 0 100px,#000 101px)}
browser-window{margin-top:1px}
.strip{height:16px;border-top:4px solid #090b0b;background:linear-gradient(90deg,#6c6c6c 0,#4b4b4d 4%,#434345 95%,#8d8d8d 100%)}
.strip svg{display:block;width:2940px;height:8px}
app-dock{margin-top:-6px;z-index:1}`,
`<div class="top"><menu-bar></menu-bar><browser-window></browser-window></div>
<div class="strip"><svg viewBox="0 0 2940 8"><path d="M1134 0h18l8 8h6l4-8h10l-2 8h-8l-6-4-8 4h-18zM1182 0h9l8 8h-14zM1198 0h42l-10 6-14 2h-12zM1272 0h8l4 8h-16zM1290 0h24l-6 8h-10zM1322 0h22l4 8h94V0h58v8h38l-6-8h8l8 8h10V0h12v8h12V0h12v8h22V0h10l4 8h14l8-8h6l2 8h-130zM1782 0h10l6 8h-12z" fill="#050506"/></svg></div>
<app-dock></app-dock>`);
</script>
</body>
</html>
